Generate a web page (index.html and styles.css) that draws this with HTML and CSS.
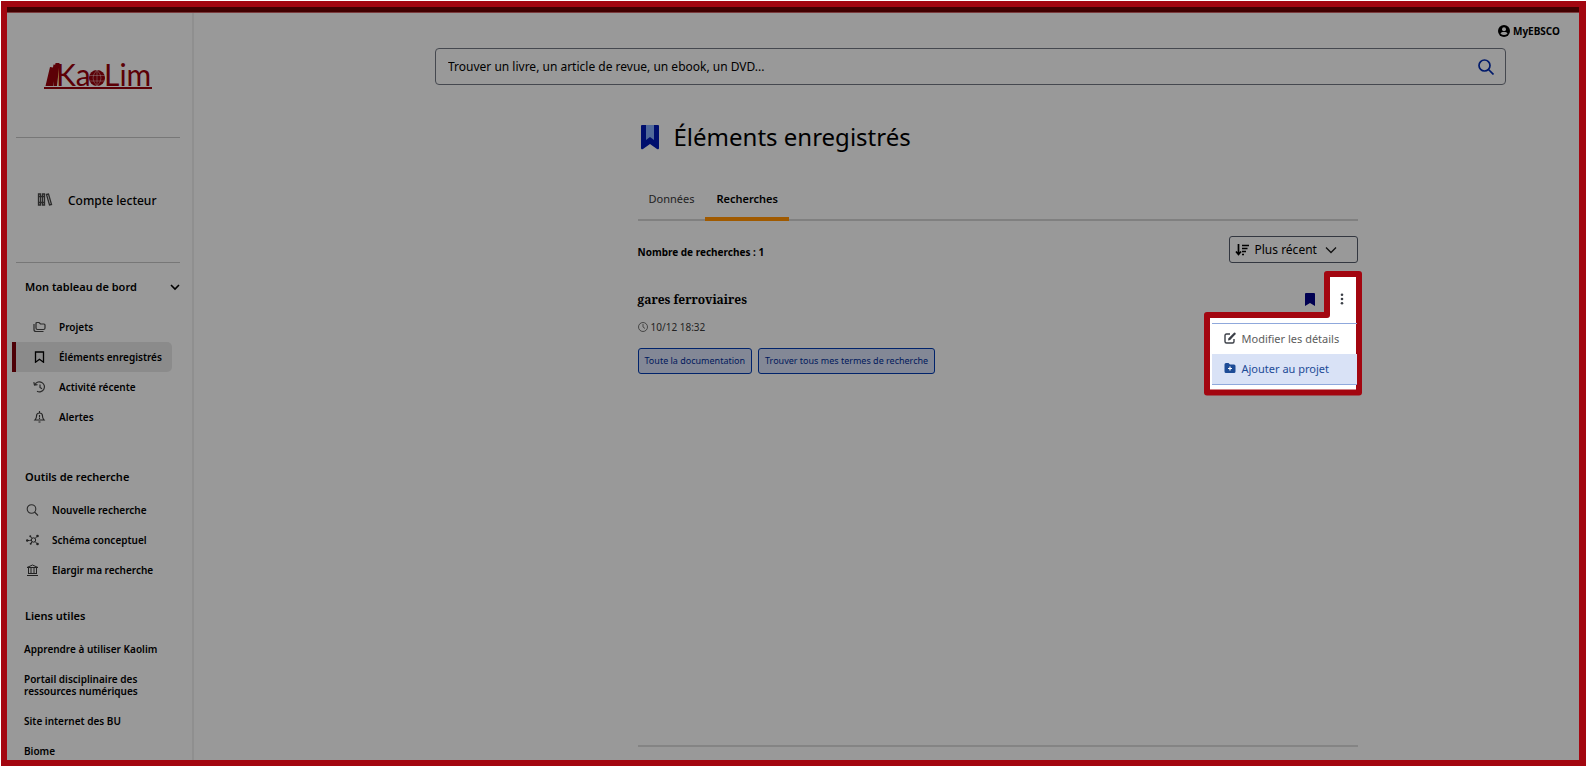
FILE: index.html
```html
<!DOCTYPE html>
<html lang="fr">
<head>
    <meta charset="UTF-8">
    <meta name="viewport" content="width=device-width, initial-scale=1.0">
    <title>KaoLim - Éléments enregistrés</title>
    <link rel="stylesheet" href="styles.css">
</head>
<body>
    <div class="frame">
        <div class="topbar"></div>
        <div class="layout">
            <aside class="sidebar">
                <a class="logo" href="#" aria-label="KaoLim">
                    <svg width="112" height="44" viewBox="0 0 112 44" fill="#5c0006">
                        <path d="M2.500 33L7 14l3 .6L6.500 33zM6.500 33L10.500 11.500l3.500.5-4 21zM10.500 33L12.500 10l4 0L14 33zM1 34h108v2H1z"/>
                        <text x="13" y="33" class="logo-text">Ka</text>
                        <circle cx="54" cy="25" r="8"/>
                        <path d="M46 22.500h16M46 28h16M54 17v16M54 17q-8 8 0 16M54 17q8 8 0 16" fill="none" stroke="#999" stroke-width=".4"/>
                        <text x="61" y="33" class="logo-text">Lim</text>
                    </svg>
                </a>
                <a class="account" href="#">
                    <svg width="16" height="14" viewBox="0 0 16 14" fill="none" stroke="#2b2b2b" stroke-width="1.300">
                        <path d="M1.500 1h2v11h-2zM5.500 1h2v11h-2zM9.500 1.500l2-.5 3 10.500-2 .5zM1 3.500h7M1 9.500h7"/>
                    </svg>
                    Compte lecteur
                </a>
                <nav class="dashboard">
                    <button class="section-title toggle" type="button">
                        Mon tableau de bord
                        <svg width="10" height="10" viewBox="0 0 10 10" fill="none" stroke="#000" stroke-width="1.600"><path d="M1 3l4 4 4-4"/></svg>
                    </button>
                    <ul class="nav-list">
                        <li><a class="nav-item" href="#">
                            <svg width="13" height="12" viewBox="0 0 13 12" fill="none" stroke="#2b2b2b" stroke-width="1.200"><path d="M3 2.500q0-1 1-1h2l1.500 1.500H11q1 0 1 1V7q0 1.500-1.500 1.500h-6Q3 8.500 3 7zM1 3v5.500q0 2 2 2h7.500"/></svg>
                            Projets</a></li>
                        <li><a class="nav-item active" href="#">
                            <svg width="13" height="12" viewBox="0 0 13 12" fill="none" stroke="#000" stroke-width="1.300"><path d="M2.500 1h8v10.200l-4-3-4 3z"/></svg>
                            Éléments enregistrés</a></li>
                        <li><a class="nav-item" href="#">
                            <svg width="13" height="12" viewBox="0 0 13 12" fill="none" stroke="#2b2b2b" stroke-width="1.200"><path d="M2 3.500A5 5 0 1 1 4 10.200M.8 1.200L1.500 4l3-.3M7 3.500v3l2 1.200"/></svg>
                            Activité récente</a></li>
                        <li><a class="nav-item" href="#">
                            <svg width="13" height="12" viewBox="0 0 13 12" fill="none" stroke="#222" stroke-width="1.100"><path d="M2 9q1.500-1.500 1.500-4a3 3 0 0 1 6 0Q9.500 7.500 11 9zM6.500 0v2M5.500 11h2M6.500 4v2.500M6.500 7v1"/></svg>
                            Alertes</a></li>
                    </ul>
                </nav>
                <nav class="tools">
                    <h2 class="section-title">Outils de recherche</h2>
                    <ul class="nav-list">
                        <li><a class="nav-item" href="#">
                            <svg width="13" height="12" viewBox="0 0 13 12" fill="none" stroke="#2b2b2b" stroke-width="1.100"><circle cx="5.500" cy="5" r="4.300"/><path d="M8.500 8l3.500 3.500"/></svg>
                            Nouvelle recherche</a></li>
                        <li><a class="nav-item" href="#">
                            <svg width="13" height="12" viewBox="0 0 13 12" fill="none" stroke="#222"><circle cx="7.500" cy="6" r="2.200"/><path d="M1 6.500h2.500l2-.5M9 4.500L11 2.500M9 7.500L11 9.500M6 4.500L4.500 2.500M6 7.500l-1 2"/><g fill="#222" stroke="none"><circle cx="1.200" cy="6.500" r="1.200"/><circle cx="11.500" cy="2" r="1.300"/><circle cx="11.500" cy="10" r="1.300"/><circle cx="4.300" cy="2.200" r="1"/><circle cx="4.700" cy="9.800" r="1"/></g></svg>
                            Schéma conceptuel</a></li>
                        <li><a class="nav-item" href="#">
                            <svg width="13" height="12" viewBox="0 0 13 12" fill="none" stroke="#222"><path d="M1 3.500L6.500 1 12 3.500zM1 11.500h11M2 9.500h9M2.500 4v5M5 4v5M8 4v5M10.500 4v5"/></svg>
                            Elargir ma recherche</a></li>
                    </ul>
                </nav>
                <nav class="links">
                    <h2 class="section-title">Liens utiles</h2>
                    <ul class="link-list">
                        <li><a href="#">Apprendre à utiliser Kaolim</a></li>
                        <li><a href="#">Portail disciplinaire des ressources numériques</a></li>
                        <li><a href="#">Site internet des BU</a></li>
                        <li><a href="#">Biome</a></li>
                    </ul>
                </nav>
            </aside>

            <main class="main">
                <header class="header">
                    <a class="user" href="#">
                        <svg width="12" height="12" viewBox="0 0 12 12"><circle cx="6" cy="6" r="6" fill="#000"/><circle cx="6" cy="4.300" r="2" fill="#999"/><path d="M2.500 8.800q.5-1.800 2-1.800h3q1.500 0 2 1.800-3.500 2.600-7 0z" fill="#999"/></svg>
                        MyEBSCO
                    </a>
                    <form class="search">
                        <input type="search" aria-label="Recherche" placeholder="Trouver un livre, un article de revue, un ebook, un DVD...">
                        <button type="button" aria-label="Lancer la recherche">
                            <svg width="16" height="16" viewBox="0 0 16 16" fill="none" stroke="#001a6b" stroke-width="1.700"><circle cx="6.500" cy="6.500" r="5.500"/><path d="M10.500 10.500l5 5"/></svg>
                        </button>
                    </form>
                </header>

                <div class="content">
                    <h1 class="title">
                        <svg width="20" height="26" viewBox="0 0 20 26"><path d="M1 2q0-1 1-1h16q1 0 1 1v22q0 2-2 1l-7-5-7 5q-2 1-2-1z" fill="#000f6e"/><path d="M6 1h8v15l-4-3-4 3z" fill="#526a99"/></svg>
                        Éléments enregistrés
                    </h1>
                    <div class="tabs" role="tablist">
                        <button class="tab" type="button" role="tab">Données</button>
                        <button class="tab selected" type="button" role="tab" aria-selected="true">Recherches</button>
                    </div>
                    <div class="toolbar">
                        <p class="count">Nombre de recherches : 1</p>
                        <label class="sort">
                            <svg width="14" height="14" viewBox="0 0 14 14" fill="none" stroke="#000" stroke-width="1.700"><path d="M3.500 1v10M1 8.500L3.500 11.500 6 8.500M7 2.500h7M7 5.500h5.500M7 8.500h4M7 11.500h2"/></svg>
                            <select aria-label="Trier par">
                                <option>Plus récent</option>
                                <option>Plus ancien</option>
                            </select>
                            <svg width="12" height="12" viewBox="0 0 12 12" fill="none" stroke="#111" stroke-width="1.300"><path d="M1 3.500l5 5 5-5"/></svg>
                        </label>
                    </div>

                    <article class="result">
                        <div class="result-head">
                            <h2 class="result-title">gares ferroviaires</h2>
                            <button class="icon-button" type="button" aria-label="Enregistré">
                                <svg width="10" height="13" viewBox="0 0 10 13"><path d="M0 1q0-1 1-1h8q1 0 1 1v12L5 10 0 13z" fill="#000052"/></svg>
                            </button>
                            <!-- actions menu, shown open with its outline -->
                            <div class="actions">
                                <svg class="outline" width="160" height="126" viewBox="0 0 160 126"><path d="M124 4h32v118.500H4V45h120z" fill="#fff" stroke="#a30610" stroke-width="6" stroke-linejoin="round"/></svg>
                                <button class="icon-button kebab" type="button" aria-label="Actions" aria-expanded="true">
                                    <svg width="4" height="12" viewBox="0 0 4 12" fill="#3c4048"><circle cx="2" cy="1.700" r="1.300"/><circle cx="2" cy="6" r="1.300"/><circle cx="2" cy="10.300" r="1.300"/></svg>
                                </button>
                                <div class="menu">
                                    <button class="menu-item" type="button">
                                        <svg width="12" height="12" viewBox="0 0 12 12" fill="none" stroke="#3c4048" stroke-width="1.400"><path d="M6 2H2.500Q1 2 1 3.500v6Q1 11 2.500 11h6Q10 11 10 9.500V7"/><path d="M4 8.500l.5-2.300L10 .7q.8-.5 1.500.2.5.7 0 1.400L6.200 8z" fill="#3c4048" stroke="none"/></svg>
                                        Modifier les détails
                                    </button>
                                    <button class="menu-item hovered" type="button">
                                        <svg width="12" height="12" viewBox="0 0 12 12"><path d="M.5 2.500Q.5 1 2 1h2.500L6 2.500h4q1.500 0 1.500 1.500v5.500q0 1.500-1.500 1.500H2Q.5 11 .5 9.500z" fill="#1d4b96"/><path d="M6 4.500v4M4 6.500h4" stroke="#fff" stroke-width="1.200"/></svg>
                                        Ajouter au projet
                                    </button>
                                </div>
                            </div>
                        </div>
                        <p class="date">
                            <svg width="10" height="10" viewBox="0 0 10 10" fill="none" stroke="#333" stroke-width=".8"><circle cx="5" cy="5" r="4.500"/><path d="M5 2v3l2 1.500"/></svg>
                            10/12 18:32
                        </p>
                        <div class="tags">
                            <button class="tag" type="button">Toute la documentation</button>
                            <button class="tag" type="button">Trouver tous mes termes de recherche</button>
                        </div>
                    </article>
                    <hr class="end-line">
                </div>
            </main>
        </div>
    </div>
</body>
</html>
```
FILE: styles.css
```css
* {
    box-sizing: border-box;
}
body {
    margin: 0;
    padding: 1px 0 1px 1px;
    height: 100vh;
    background-color: #fff;
    color: #000;
    font-family: "Noto Sans", "Open Sans", sans-serif;
    font-size: 11px;
}
h1, h2, p, ul {
    margin: 0;
    padding: 0;
}
ul {
    list-style: none;
}
a {
    color: inherit;
    text-decoration: none;
}
button, input, select {
    font: inherit;
    color: inherit;
    background: none;
    border: none;
    padding: 0;
    margin: 0;
}
svg {
    flex: none;
}
.frame {
    display: flex;
    flex-direction: column;
    height: 100%;
    border: 6px solid #a30610;
    border-right-width: 7px;
    background-color: #999;
    overflow: hidden;
}
.topbar {
    flex: none;
    height: 6px;
    background-color: #420000;
    border-bottom: 1px solid #7a3a3c;
}
.layout {
    display: flex;
    flex: 1;
    min-height: 0;
}

/* sidebar */
.sidebar {
    flex: none;
    width: 187px;
    border-right: 2px solid #8f8f8f;
    font-size: 10px;
    font-weight: 600;
    overflow: hidden;
}
.logo {
    display: flex;
    align-items: center;
    height: 125px;
    margin: 0 12px 0 9px;
    padding-left: 27px;
    border-bottom: 1px solid #777;
}
.logo-text {
    font-family: Lato, sans-serif;
    font-size: 30px;
    font-weight: 400;
}
.account {
    display: flex;
    align-items: center;
    gap: 15px;
    height: 125px;
    margin: 0 12px 0 9px;
    padding-left: 21px;
    border-bottom: 1px solid #777;
    font-size: 12px;
    font-weight: 500;
}
.section-title {
    font-size: 11px;
    font-weight: 600;
    line-height: 16px;
    padding-left: 18px;
}
.toggle {
    display: flex;
    justify-content: space-between;
    align-items: center;
    width: 100%;
    padding-right: 12px;
}
.dashboard {
    padding-top: 16px;
}
.dashboard .nav-list {
    padding: 17px 20px 0 5px;
}
.nav-item {
    display: flex;
    align-items: center;
    gap: 13px;
    height: 30px;
    padding-left: 18px;
    border-left: 4px solid transparent;
}
.dashboard .nav-item {
    padding-left: 17px;
}
.nav-item.active {
    background-color: #8b8b8b;
    border-left-color: #4d0006;
    border-radius: 0 5px 5px 0;
}
.tools {
    padding-top: 37px;
}
.tools .nav-list {
    padding-top: 10px;
}
.tools .nav-item {
    padding-left: 15px;
}
.links {
    padding-top: 23px;
}
.link-list {
    display: flex;
    flex-direction: column;
    gap: 18px;
    padding: 19px 30px 0 17px;
    line-height: 12px;
}

/* main column */
.main {
    flex: 1;
    display: flex;
    flex-direction: column;
    padding: 10px 19px 13px 241px;
}
.user {
    display: flex;
    justify-content: flex-end;
    align-items: center;
    gap: 3px;
    height: 16px;
    font-size: 10px;
    font-weight: 700;
}
.search {
    display: flex;
    align-items: center;
    height: 37px;
    margin: 9px 54px 0 0;
    padding: 0 11px 0 12px;
    border: 1px solid #45484f;
    border-radius: 4px;
    font-size: 12px;
}
.search input {
    flex: 1;
    outline: none;
}
.search input::placeholder {
    color: #000;
    opacity: 1;
}
.search button {
    display: flex;
}
.content {
    flex: 1;
    display: flex;
    flex-direction: column;
    width: 100%;
    max-width: 720px;
    margin: 0 auto;
    padding-top: 34px;
}
.title {
    display: flex;
    align-items: center;
    gap: 14px;
    padding-left: 2px;
    font-size: 24px;
    font-weight: 400;
    line-height: 36px;
}
.tabs {
    display: flex;
    margin-top: 28px;
    border-bottom: 2px solid #808080;
}
.tab {
    height: 38px;
    padding: 0 11px 4px;
    margin-bottom: -2px;
    border-bottom: 4px solid transparent;
    color: #222;
}
.tab.selected {
    border-bottom-color: #a05a00;
    color: #000;
    font-weight: 600;
}
.toolbar {
    display: flex;
    justify-content: space-between;
    align-items: center;
    margin-top: 15px;
}
.count {
    padding-top: 4px;
    font-size: 10px;
    font-weight: 700;
}
.sort {
    display: flex;
    align-items: center;
    gap: 6px;
    width: 129px;
    height: 27px;
    padding-left: 5px;
    border: 1px solid #333740;
    border-radius: 3px;
    font-size: 12px;
}
.sort select {
    appearance: none;
    outline: none;
}
.result {
    padding-top: 26px;
}
.result-head {
    display: flex;
    align-items: center;
    height: 20px;
}
.result-title {
    flex: 1;
    font-family: "Noto Serif", "DejaVu Serif Condensed", "DejaVu Serif", serif;
    font-size: 12px;
    font-weight: 700;
}
.icon-button {
    display: flex;
    justify-content: center;
    align-items: center;
}
.actions {
    position: relative;
    margin: 0 14px 0 25px;
}
.kebab {
    position: relative;
}
.outline {
    position: absolute;
    right: -19px;
    top: -23px;
}
.menu {
    position: absolute;
    right: -13px;
    top: 30px;
    width: 145px;
    border: solid #8fa8dc;
    border-width: 1px 0;
}
.menu-item {
    display: flex;
    align-items: center;
    gap: 6px;
    width: 100%;
    height: 30px;
    padding: 0 0 2px 12px;
    color: #5c5c5c;
    font-size: 11px;
}
.menu-item.hovered {
    background-color: #d9e2f6;
    color: #1d4b96;
}
.date {
    display: flex;
    align-items: center;
    gap: 3px;
    margin-top: 10px;
    line-height: 16px;
    font-size: 10px;
    color: #222;
}
.tags {
    display: flex;
    gap: 6px;
    margin-top: 13px;
}
.tag {
    height: 26px;
    padding: 0 6px 2px;
    border: 1px solid #00236b;
    border-radius: 3px;
    background-color: #838896;
    color: #00185c;
    font-size: 9px;
    font-weight: 400;
}
.end-line {
    width: 100%;
    margin: auto 0 0;
    border: none;
    border-top: 2px solid #848484;
}
```
